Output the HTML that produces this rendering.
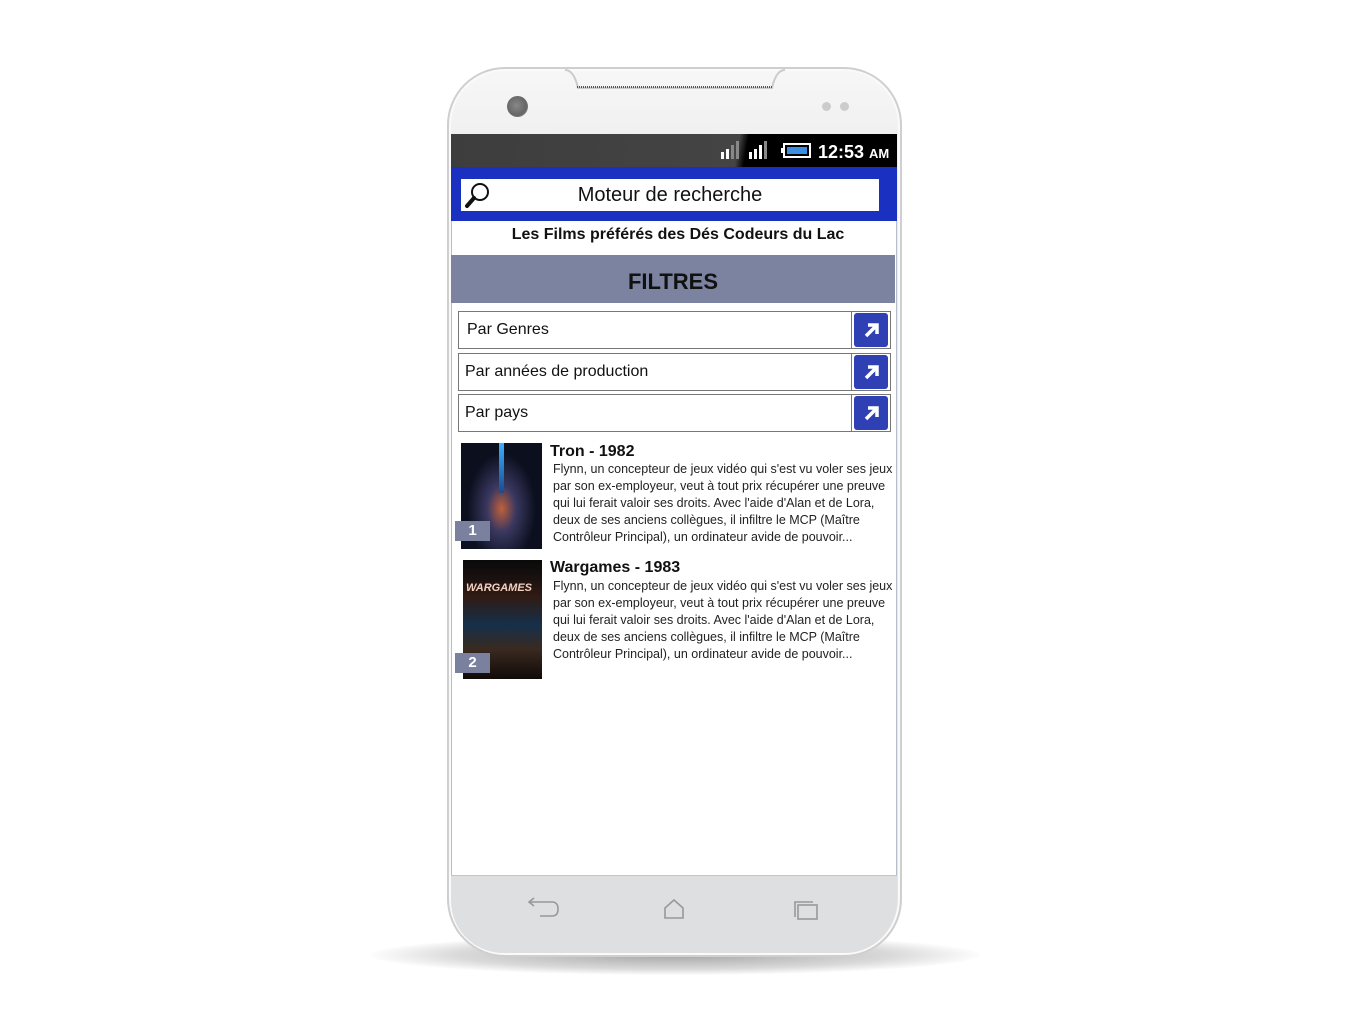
<!DOCTYPE html>
<html><head><meta charset="utf-8">
<style>
*{margin:0;padding:0;box-sizing:border-box}
body{width:1371px;height:1024px;background:#fff;position:relative;overflow:hidden;font-family:"Liberation Sans",sans-serif}
.abs{position:absolute}
.shadow{left:370px;top:935px;width:610px;height:40px;border-radius:50%;background:radial-gradient(ellipse at center,rgba(0,0,0,.35) 0%,rgba(0,0,0,.15) 50%,rgba(0,0,0,0) 72%)}
.phone{left:447px;top:67px;width:455px;height:890px;border-radius:58px;background:linear-gradient(#f7f7f7,#ececec 12%,#e4e4e4);border:2px solid #cfcfcf;box-shadow:inset 0 0 0 2px #fafafa}
.screen{left:451px;top:134px;width:446px;height:741px;background:#fff;border-left:1px solid #b5bfcc;border-right:1px solid #b5bfcc}
.status{left:451px;top:134px;width:446px;height:33px;background:linear-gradient(100deg,#3d3d3d 0%,#444 64%,#000 66%,#000 100%)}
.blue{left:451px;top:167px;width:446px;height:54px;background:#1a30c0}
.search{left:461px;top:179px;width:418px;height:32px;background:#fff;font-size:20px;text-align:center;line-height:32px;color:#111}
.title{left:455px;top:226px;width:446px;text-align:center;font-weight:bold;font-size:16px;color:#111}
.filt{left:451px;top:255px;width:444px;height:48px;background:#7b83a1;text-align:center;font-weight:bold;font-size:22px;line-height:54px;color:#111}
.row{left:458px;width:433px;height:38px;border:1px solid #777;font-size:16px;line-height:36px;padding-left:6px;color:#111}
.btn{position:absolute;right:2px;top:1px;width:34px;height:34px;background:#2f40b4;border-radius:3px}
.sep{position:absolute;right:38px;top:0;width:1px;height:36px;background:#777}
.mtitle{font-weight:bold;font-size:16px;color:#111}
.desc{font-size:12.5px;line-height:17px;color:#222;width:345px;white-space:nowrap}
.badge{width:35px;height:20px;background:#7a819e;color:#fff;font-weight:bold;font-size:15px;text-align:center;line-height:20px}
.nav{left:451px;top:875px;width:446px;height:78px;background:#dedfe1;border-top:1px solid #b8c8e0;border-radius:0 0 52px 52px}
</style></head><body>
<div class="abs shadow"></div>
<div class="abs phone"></div>
<svg class="abs" style="left:560px;top:68px" width="230" height="24"><path d="M5 2 Q14 2 18 20 L212 20 Q216 2 225 2" fill="none" stroke="#ccc" stroke-width="2"/><line x1="17" y1="19" x2="212" y2="19" stroke="#555" stroke-width="2" stroke-dasharray="1 1"/></svg>
<div class="abs" style="left:507px;top:96px;width:21px;height:21px;border-radius:50%;background:radial-gradient(circle at 45% 45%,#888,#666 60%,#aaa)"></div>
<div class="abs" style="left:822px;top:102px;width:9px;height:9px;border-radius:50%;background:#ccc"></div>
<div class="abs" style="left:840px;top:102px;width:9px;height:9px;border-radius:50%;background:#ccc"></div>
<div class="abs screen"></div>
<div class="abs status"></div>
<svg class="abs" style="left:720px;top:140px" width="172" height="22">
<rect x="1" y="12" width="3" height="7" fill="#fff"/><rect x="6" y="9" width="3" height="10" fill="#fff"/><rect x="11" y="5" width="3" height="14" fill="#888"/><rect x="16" y="1" width="3" height="18" fill="#888"/>
<rect x="29" y="12" width="3" height="7" fill="#fff"/><rect x="34" y="9" width="3" height="10" fill="#fff"/><rect x="39" y="5" width="3" height="14" fill="#fff"/><rect x="44" y="1" width="3" height="18" fill="#888"/>
<rect x="64" y="4" width="26" height="13" fill="none" stroke="#fff" stroke-width="2"/><rect x="61" y="8" width="3" height="5" fill="#fff"/><rect x="67" y="7" width="20" height="7" fill="#3a8fe0"/>
<text x="98" y="18" fill="#fff" font-size="18" font-weight="bold" font-family="Liberation Sans">12:53 <tspan font-size="13">AM</tspan></text></svg>
<div class="abs blue"></div>
<div class="abs search">Moteur de recherche</div>
<svg class="abs" style="left:464px;top:181px" width="28" height="28"><circle cx="16" cy="11" r="8" fill="none" stroke="#111" stroke-width="2"/><line x1="10" y1="17" x2="3" y2="25" stroke="#111" stroke-width="4" stroke-linecap="round"/></svg>
<div class="abs title">Les Films préférés des Dés Codeurs du Lac</div>
<div class="abs filt">FILTRES</div>
<div class="abs row" style="top:311px;padding-left:8px">Par Genres<div class="sep"></div><div class="btn"><svg width="34" height="34"><path d="M12 23 L22 13 M14 12 H23 V21" fill="none" stroke="#fff" stroke-width="3.5"/></svg></div></div>
<div class="abs row" style="top:353px">Par années de production<div class="sep"></div><div class="btn"><svg width="34" height="34"><path d="M12 23 L22 13 M14 12 H23 V21" fill="none" stroke="#fff" stroke-width="3.5"/></svg></div></div>
<div class="abs row" style="top:394px">Par pays<div class="sep"></div><div class="btn"><svg width="34" height="34"><path d="M12 23 L22 13 M14 12 H23 V21" fill="none" stroke="#fff" stroke-width="3.5"/></svg></div></div>
<div class="abs" style="left:461px;top:443px;width:81px;height:106px;background:radial-gradient(ellipse at 50% 62%,#c0603a 0%,#3a3860 25%,#0b0f1e 60%)"></div>
<div class="abs" style="left:499px;top:443px;width:5px;height:50px;background:linear-gradient(#3ab0ff,#1a4a90)"></div>
<div class="abs badge" style="left:455px;top:521px">1</div>
<div class="abs mtitle" style="left:550px;top:443px">Tron - 1982</div>
<div class="abs desc" style="left:553px;top:461px">Flynn, un concepteur de jeux vidéo qui s'est vu voler ses jeux<br>par son ex-employeur, veut à tout prix récupérer une preuve<br>qui lui ferait valoir ses droits. Avec l'aide d'Alan et de Lora,<br>deux de ses anciens collègues, il infiltre le MCP (Maître<br>Contrôleur Principal), un ordinateur avide de pouvoir...</div>
<div class="abs" style="left:463px;top:560px;width:79px;height:119px;background:linear-gradient(#0a0a0a 0%,#1a1010 15%,#301a12 30%,#15304a 55%,#3a2a20 75%,#100a08 100%)"></div>
<div class="abs" style="left:466px;top:582px;width:72px;font-size:11px;font-weight:bold;color:#f2d0c0;font-style:italic">WARGAMES</div>
<div class="abs badge" style="left:455px;top:653px">2</div>
<div class="abs mtitle" style="left:550px;top:559px">Wargames - 1983</div>
<div class="abs desc" style="left:553px;top:578px">Flynn, un concepteur de jeux vidéo qui s'est vu voler ses jeux<br>par son ex-employeur, veut à tout prix récupérer une preuve<br>qui lui ferait valoir ses droits. Avec l'aide d'Alan et de Lora,<br>deux de ses anciens collègues, il infiltre le MCP (Maître<br>Contrôleur Principal), un ordinateur avide de pouvoir...</div>
<div class="abs nav"></div>
<svg class="abs" style="left:520px;top:895px" width="310" height="30">
<path d="M10 7 H32 Q38 7 38 14 Q38 21 32 21 H20 M14 3 L9 7 L14 11" fill="none" stroke="#999" stroke-width="1.6"/>
<path d="M145 23 V13 L154 5 L163 13 V23 Z" fill="none" stroke="#999" stroke-width="1.6"/>
<path d="M275 22 V7 H293" fill="none" stroke="#999" stroke-width="1.6"/><rect x="278" y="10" width="19" height="14" fill="none" stroke="#999" stroke-width="1.6"/>
</svg>
</body></html>
